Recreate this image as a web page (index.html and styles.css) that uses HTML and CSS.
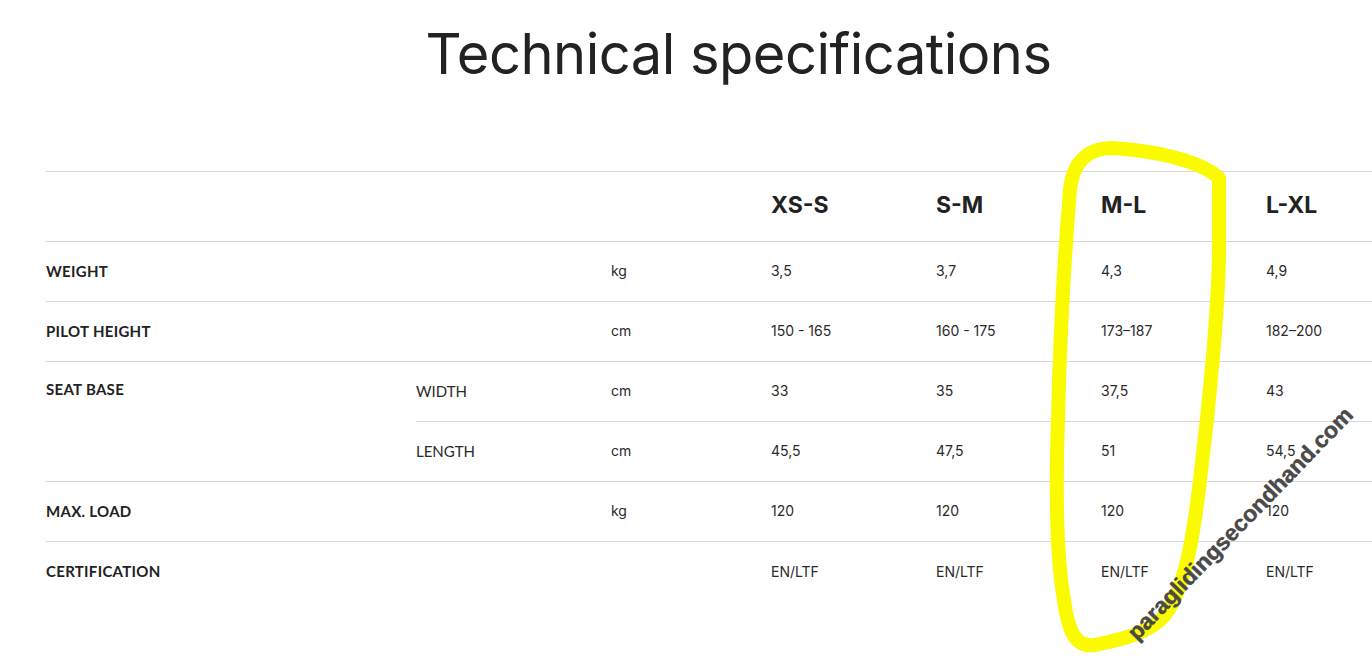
FILE: index.html
```html
<!DOCTYPE html>
<html lang="en">
<head>
<meta charset="utf-8">
<title>Technical specifications</title>
<link rel="stylesheet" href="styles.css">
</head>
<body>
<main class="page">
  <section class="specs">
    <h1 class="title">Technical specifications</h1>
    <table class="spec-table">
      <colgroup>
        <col class="c-label"><col class="c-sub"><col class="c-unit">
        <col class="c-size"><col class="c-size"><col class="c-size"><col class="c-size">
      </colgroup>
      <thead>
        <tr class="head-row">
          <th></th><th></th><th></th>
          <th>XS-S</th><th>S-M</th><th>M-L</th><th>L-XL</th>
        </tr>
      </thead>
      <tbody>
        <tr>
          <td class="label">WEIGHT</td><td></td><td>kg</td>
          <td>3,5</td><td>3,7</td><td>4,3</td><td>4,9</td>
        </tr>
        <tr>
          <td class="label">PILOT HEIGHT</td><td></td><td>cm</td>
          <td>150 - 165</td><td>160 - 175</td><td>173–187</td><td>182–200</td>
        </tr>
        <tr>
          <td class="label label-span" rowspan="2">SEAT BASE</td><td class="sub">WIDTH</td><td>cm</td>
          <td>33</td><td>35</td><td>37,5</td><td>43</td>
        </tr>
        <tr>
          <td class="sub">LENGTH</td><td>cm</td>
          <td>45,5</td><td>47,5</td><td>51</td><td>54,5</td>
        </tr>
        <tr>
          <td class="label">MAX. LOAD</td><td></td><td>kg</td>
          <td>120</td><td>120</td><td>120</td><td>120</td>
        </tr>
        <tr class="last-row">
          <td class="label">CERTIFICATION</td><td></td><td></td>
          <td>EN/LTF</td><td>EN/LTF</td><td>EN/LTF</td><td>EN/LTF</td>
        </tr>
      </tbody>
    </table>
  </section>

  <svg class="scribble" width="1372" height="656" viewBox="0 0 1372 656" aria-hidden="true">
    <path d="M 1219 180 L 1219 250 C 1219 300, 1210 400, 1200 480 C 1192 550, 1183 590, 1165 615 C 1150 633, 1120 640, 1095 645 C 1075 648, 1068 630, 1064 600 C 1055 550, 1056 480, 1058 420 C 1060 330, 1065 250, 1070 190 C 1073 160, 1090 148, 1112 148 C 1150 150, 1200 160, 1219 178 Z" />
  </svg>
  <div class="watermark">paraglidingsecondhand.com</div>
</main>
</body>
</html>
```

FILE: styles.css
```css
html, body {
  margin: 0;
  padding: 0;
  background: #ffffff;
  overflow: hidden;
}

.page {
  position: relative;
  width: 1372px;
  height: 656px;
  overflow: hidden;
  color: #222222;
  font-family: "Inter", "Liberation Sans", sans-serif;
}

.specs {
  width: 1385px;
  margin-left: 46px;
  padding-top: 22px;
}

.title {
  margin: 0 0 84px 0;
  text-align: center;
  font-family: "Inter", "Liberation Sans", sans-serif;
  font-weight: 400;
  font-size: 56px;
  line-height: 65px;
  letter-spacing: -0.5px;
  color: #222222;
}

.spec-table {
  width: 1385px;
  table-layout: fixed;
  border-collapse: collapse;
  border-spacing: 0;
}

.c-label { width: 370px; }
.c-sub { width: 195px; }
.c-unit { width: 160px; }
.c-size { width: 165px; }

.spec-table th,
.spec-table td {
  border-top: 1px solid #d6d6d6;
  padding: 0;
  text-align: left;
  vertical-align: middle;
  font-size: 14px;
  font-weight: 400;
  color: #2a2a2a;
}

.head-row th {
  height: 65px;
  font-size: 23px;
  font-weight: 700;
  color: #222222;
  padding-bottom: 4px;
}

.spec-table tbody td {
  height: 57px;
  padding-bottom: 2px;
}

.spec-table .last-row td {
  height: 58px;
}

.spec-table td.label {
  font-family: "Lato", "Open Sans", sans-serif;
  font-weight: 700;
  font-size: 15px;
  letter-spacing: 0.3px;
  color: #222222;
}

.spec-table td.label-span {
  vertical-align: top;
  padding-top: 18px;
}

.spec-table td.sub {
  font-family: "Lato", "Open Sans", sans-serif;
  font-size: 15px;
}

.scribble {
  position: absolute;
  left: 0;
  top: 0;
  pointer-events: none;
}

.scribble path {
  fill: none;
  stroke: #fafa00;
  stroke-width: 14;
  stroke-linejoin: round;
  stroke-linecap: round;
}

.watermark {
  position: absolute;
  left: 1240px;
  top: 524px;
  transform: translate(-50%, -50%) rotate(-46deg);
  font-family: "Liberation Sans", sans-serif;
  font-weight: 700;
  font-size: 23px;
  color: rgba(72, 72, 72, 0.9);
  text-shadow: 0.7px 0 0 rgba(72, 72, 72, 0.9);
  white-space: nowrap;
  letter-spacing: 0;
}
```
